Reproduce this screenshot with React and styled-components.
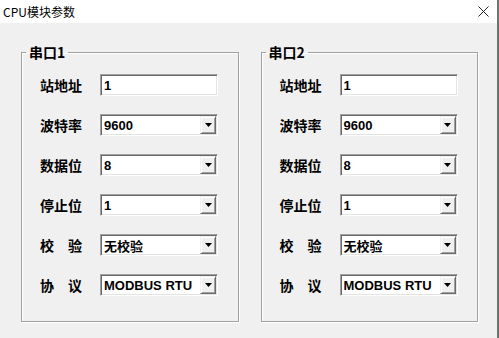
import React from 'react';
import styled, { createGlobalStyle } from 'styled-components';

const GlobalStyle = createGlobalStyle`
  html, body {
    margin: 0;
    padding: 0;
    background: #f0f0f0;
  }
`;

const Window = styled.div`
  width: 499px;
  height: 338px;
  box-sizing: border-box;
  display: flex;
  flex-direction: column;
  background: #f0f0f0;
  border-right: 2px solid #6e7470;
  overflow: hidden;
`;

const TitleBar = styled.div`
  height: 23px;
  flex: none;
  display: flex;
  align-items: center;
  justify-content: space-between;
  background: #fff;
  padding: 0 8px 0 3px;
  font-family: "Noto Sans CJK SC", "Liberation Sans", sans-serif;
  font-size: 12px;
  color: #000;
`;

const CloseIcon = () => (
  <svg width="11" height="11" viewBox="0 0 11 11">
    <path d="M0.5 0.5 L10.5 10.5 M10.5 0.5 L0.5 10.5" stroke="#222" strokeWidth="1" />
  </svg>
);

const Body = styled.div`
  flex: 1;
  display: flex;
  gap: 22px;
  padding: 21px 19px 0 21px;
`;

const Group = styled.fieldset`
  margin: 0;
  padding: 14px 19px 25px 18px;
  width: 218px;
  height: 278px;
  box-sizing: border-box;
  border: 1px solid #a0a0a0;
  box-shadow: inset 1px 1px 0 #fff, 1px 1px 0 #fff;
  display: flex;
  flex-direction: column;
  gap: 18px;
  min-width: 0;
`;

const Legend = styled.legend`
  margin-left: -14px;
  padding: 0 3px;
  font-family: "Noto Sans CJK SC", "Liberation Sans", sans-serif;
  font-weight: bold;
  font-size: 14px;
  line-height: 16px;
  color: #000;
`;

const Row = styled.div`
  display: flex;
  align-items: center;
  height: 22px;
`;

const Label = styled.div`
  width: 42px;
  margin-right: 18px;
  display: flex;
  justify-content: ${(p) => (p.$spread ? 'space-between' : 'flex-start')};
  font-family: "Noto Sans CJK SC", sans-serif;
  font-weight: bold;
  font-size: 14px;
  color: #000;
`;

const Field = styled.div`
  width: 118px;
  height: 22px;
  box-sizing: border-box;
  display: flex;
  align-items: stretch;
  background: #fff;
  border-top: 1px solid #a0a0a0;
  border-left: 1px solid #a0a0a0;
  border-bottom: 1px solid #fff;
  border-right: 1px solid #fff;
  box-shadow: inset 1px 1px 0 #696969, inset -1px -1px 0 #e3e3e3;
  padding: 1px;
`;

const Value = styled.div`
  flex: 1;
  display: flex;
  align-items: center;
  padding-left: 2px;
  font-family: "Liberation Sans", "Noto Sans CJK SC", sans-serif;
  font-weight: bold;
  font-size: 13px;
  color: #000;
  white-space: nowrap;
  overflow: hidden;
`;

const DropButton = styled.div`
  width: 16px;
  flex: none;
  display: flex;
  align-items: center;
  justify-content: center;
  background: #f0f0f0;
  box-sizing: border-box;
  border-top: 1px solid #f0f0f0;
  border-left: 1px solid #f0f0f0;
  border-right: 1px solid #696969;
  border-bottom: 1px solid #696969;
  box-shadow: inset 1px 1px 0 #fff, inset -1px -1px 0 #a0a0a0;
`;

const Arrow = () => (
  <svg width="7" height="4" viewBox="0 0 7 4">
    <path d="M0 0 H7 L3.5 4 Z" fill="#000" />
  </svg>
);

const FieldRow = ({ label, spread, value, combo }) => (
  <Row>
    <Label $spread={spread}>
      {spread ? label.split('').map((c) => <span key={c}>{c}</span>) : label}
    </Label>
    <Field>
      <Value>{value}</Value>
      {combo && (
        <DropButton>
          <Arrow />
        </DropButton>
      )}
    </Field>
  </Row>
);

const PortGroup = ({ title }) => (
  <Group>
    <Legend>{title}</Legend>
    <FieldRow label="站地址" value="1" />
    <FieldRow label="波特率" value="9600" combo />
    <FieldRow label="数据位" value="8" combo />
    <FieldRow label="停止位" value="1" combo />
    <FieldRow label="校验" spread value="无校验" combo />
    <FieldRow label="协议" spread value="MODBUS RTU" combo />
  </Group>
);

export default function App() {
  return (
    <>
      <GlobalStyle />
      <Window>
        <TitleBar>
          <span>CPU模块参数</span>
          <CloseIcon />
        </TitleBar>
        <Body>
          <PortGroup title="串口1" />
          <PortGroup title="串口2" />
        </Body>
      </Window>
    </>
  );
}
